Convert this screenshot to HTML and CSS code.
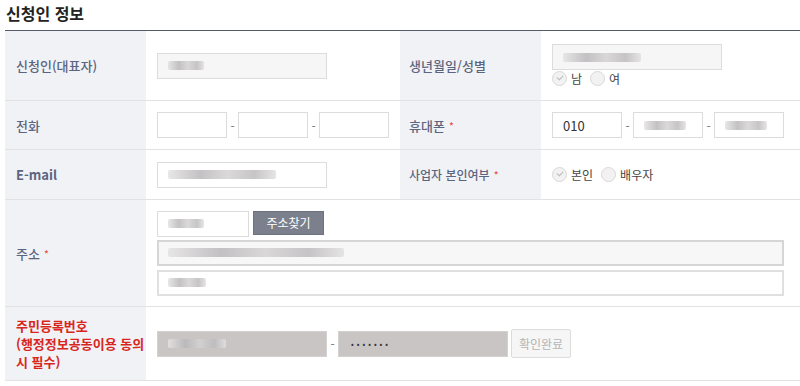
FILE: index.html
```html
<!DOCTYPE html>
<html lang="ko">
<head>
    <meta charset="UTF-8">
    <title>신청인 정보</title>
    <link rel="stylesheet" href="styles.css">
</head>
<body>
    <h2 class="section-title">신청인 정보</h2>

    <div class="form-table">
        <!-- 1행 -->
        <div class="row row-1">
            <div class="th">신청인(대표자)</div>
            <div class="td">
                <div class="input w170 filled"><span class="blur b1"></span></div>
            </div>
            <div class="th">생년월일/성별</div>
            <div class="td stack">
                <div class="input w170 filled"><span class="blur b2"></span></div>
                <div class="radios">
                    <label class="radio checked"><span class="circle"></span>남</label>
                    <label class="radio"><span class="circle"></span>여</label>
                </div>
            </div>
        </div>

        <!-- 2행 -->
        <div class="row row-2">
            <div class="th">전화</div>
            <div class="td">
                <div class="tel">
                    <div class="input w70"></div><span class="dash">-</span>
                    <div class="input w70"></div><span class="dash">-</span>
                    <div class="input w70"></div>
                </div>
            </div>
            <div class="th">휴대폰 <em>*</em></div>
            <div class="td">
                <div class="tel">
                    <div class="input w70 text">010</div><span class="dash">-</span>
                    <div class="input w70"><span class="blur b3"></span></div><span class="dash">-</span>
                    <div class="input w70"><span class="blur b3"></span></div>
                </div>
            </div>
        </div>

        <!-- 3행 -->
        <div class="row row-3">
            <div class="th bold">E-mail</div>
            <div class="td">
                <div class="input w170"><span class="blur b4"></span></div>
            </div>
            <div class="th small">사업자 본인여부 <em>*</em></div>
            <div class="td">
                <div class="radios">
                    <label class="radio checked"><span class="circle"></span>본인</label>
                    <label class="radio"><span class="circle"></span>배우자</label>
                </div>
            </div>
        </div>

        <!-- 4행 -->
        <div class="row row-wide row-4">
            <div class="th">주소 <em>*</em></div>
            <div class="td stack">
                <div class="zip">
                    <div class="input w92"><span class="blur b5"></span></div>
                    <button class="btn-dark">주소찾기</button>
                </div>
                <div class="input full gray"><span class="blur b6"></span></div>
                <div class="input full"><span class="blur b7"></span></div>
            </div>
        </div>

        <!-- 5행 -->
        <div class="row row-wide row-5">
            <div class="th red">주민등록번호<br>(행정정보공동이용 동의<br>시 필수)</div>
            <div class="td">
                <div class="jumin">
                    <div class="input w170 locked"><span class="blur b8"></span></div>
                    <span class="dash">-</span>
                    <div class="input w170 locked dots">•••••••</div>
                    <button class="btn-done">확인완료</button>
                </div>
            </div>
        </div>
    </div>
</body>
</html>
```

FILE: styles.css
```css
* {
    margin: 0;
    padding: 0;
    box-sizing: border-box;
}

body {
    font-family: "Noto Sans CJK KR", "Noto Sans", sans-serif;
    background: #fff;
    color: #333;
    padding: 0 0 0 5px;
}

.section-title {
    font-size: 16px;
    font-weight: 700;
    color: #222;
    height: 30px;
    line-height: 26px;
    padding-left: 1px;
}

.form-table {
    border-top: 1px solid #555a66;
}

.row {
    display: grid;
    grid-template-columns: 141px 254px 141px 1fr;
    border-bottom: 1px solid #e2e2e2;
}

.row-wide {
    grid-template-columns: 141px 1fr;
}

.row-1 { height: 70px; }
.row-2 { height: 49px; }
.row-3 { height: 50px; }
.row-4 { height: 107px; }
.row-5 { height: 74px; }

.th {
    background: #f1f2f6;
    color: #5c6580;
    font-size: 13px;
    font-weight: 500;
    padding-left: 11px;
    display: flex;
    align-items: center;
}

.th + .td + .th {
    padding-left: 9px;
}

.th.bold {
    font-weight: 700;
}

.th.small {
    font-size: 12px;
}

.th em {
    font-style: normal;
    color: #e5534b;
    font-size: 10px;
    margin-left: 4px;
}

.th.red {
    color: #d9261c;
    font-weight: 700;
    line-height: 18px;
}

.td {
    padding-left: 11px;
    display: flex;
    align-items: center;
}

.td.stack {
    flex-direction: column;
    align-items: flex-start;
    justify-content: center;
}

.input {
    height: 26px;
    border: 1px solid #dcdcdc;
    background: #fff;
    font-size: 13px;
    color: #333;
    display: flex;
    align-items: center;
    padding-left: 10px;
}

.w170 { width: 170px; }
.w92 { width: 92px; }
.w70 { width: 70px; }
.full { width: 627px; }

.input.filled {
    background: #f6f6f6;
}

.input.gray {
    background: #f7f7f7;
    border: 2px solid #d6d6d6;
    padding-left: 9px;
}

.input.full + .input.full {
    border-width: 2px;
    border-color: #e0e0e0;
    padding-left: 9px;
}

.input.locked {
    background: #c9c5c5;
    border-color: #d4d1d1;
}

.input.dots {
    font-size: 8px;
    letter-spacing: 3px;
    color: #333;
    padding-left: 12px;
}

.blur {
    display: block;
    height: 9px;
    border-radius: 2px;
    background: linear-gradient(90deg, #e4e2e3, #b9b7b9 30%, #d4d2d3 55%, #bdbbbd 80%, #e2e0e1);
    opacity: 0.85;
}

.b1 { width: 36px; }
.b2 { width: 78px; }
.b3 { width: 42px; }
.b4 { width: 108px; }
.b5 { width: 36px; }
.b6 { width: 176px; }
.b7 { width: 38px; }
.b8 { width: 58px; }

.tel {
    display: flex;
    align-items: center;
}

.dash {
    width: 11px;
    text-align: center;
    font-size: 12px;
    color: #777;
}

.radios {
    display: flex;
    gap: 8px;
    margin-top: 6px;
}

.td > .radios {
    margin-top: 0;
}

.radio {
    display: flex;
    align-items: center;
    gap: 4px;
    font-size: 12px;
    color: #444;
}

.circle {
    width: 15px;
    height: 15px;
    border-radius: 50%;
    border: 1px solid #d8d8d8;
    background: #f2f2f2;
    position: relative;
}

.radio.checked .circle::after {
    content: "";
    position: absolute;
    left: 4px;
    top: 3px;
    width: 5px;
    height: 3px;
    border-left: 1.5px solid #bbb;
    border-bottom: 1.5px solid #bbb;
    transform: rotate(-45deg);
}

.zip {
    display: flex;
    gap: 4px;
    margin-bottom: 3px;
}

.row-4 .input.full {
    margin-bottom: 4px;
}

.row-4 .input.full:last-child {
    margin-bottom: 0;
}

.btn-dark {
    width: 71px;
    height: 24px;
    background: #7c808c;
    border: 1px solid #6e727e;
    color: #fff;
    font-family: inherit;
    font-size: 12px;
}

.jumin {
    display: flex;
    align-items: center;
}

.btn-done {
    margin-left: 3px;
    width: 60px;
    height: 29px;
    background: #f6f6f6;
    border: 1px solid #dcdcdc;
    border-radius: 2px;
    color: #b5b5b5;
    font-family: inherit;
    font-size: 12px;
}
```
